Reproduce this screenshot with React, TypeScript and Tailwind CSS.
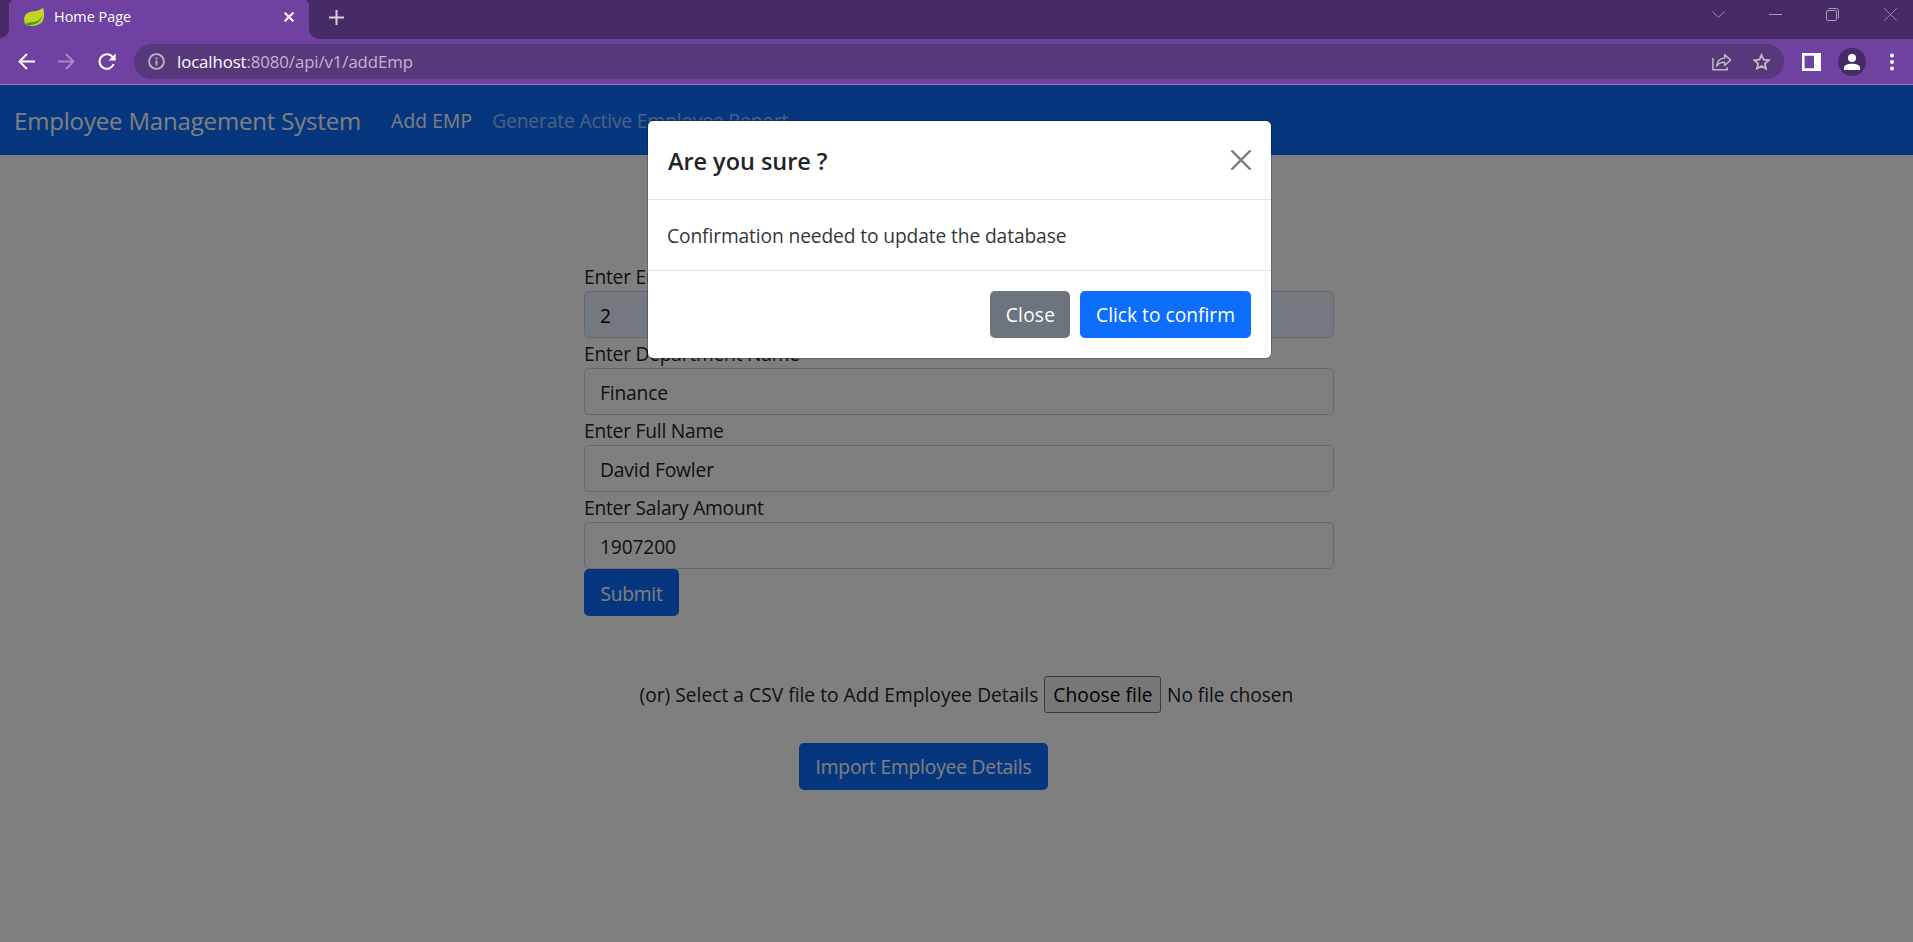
import type { ReactNode } from "react";

function LeafIcon() {
  return (
    <svg width="20" height="20" viewBox="0 0 20 20" className="shrink-0">
      <path d="M19 0.3C20.4 5.5 20.6 11 18.4 14.6C15.8 18.7 9.6 19.6 3.2 18.6C0.6 17.2 -0.2 13.8 0.3 10.6C1 6.6 4.4 4.9 8.6 4.4C12.8 3.9 16.8 3.6 19 0.3Z" fill="#c0d626" />
      <path d="M18.4 7.4C17.6 11.6 14 14.2 9.6 14.9C6.6 15.4 3.4 15.2 1.8 16.6C2 17.6 2.6 18.4 3.4 18.7C7 17.8 11.4 17.6 14.4 15.2C16.9 13.1 18.2 10.4 18.4 7.4Z" fill="#4d9a2a" />
    </svg>
  );
}

function WindowControls() {
  return (
    <div className="flex h-[29px] items-center pr-[16px]">
      <svg width="13" height="7" viewBox="0 0 13 7" className="mr-[44px]" fill="none" stroke="#9a87ab">
        <path d="M0.4 0.4L6.5 6.4L12.6 0.4" />
      </svg>
      <svg width="13" height="13" viewBox="0 0 13 13" className="mr-[44px]" fill="none" stroke="#a897b6">
        <path d="M0 6.5H13" />
      </svg>
      <svg width="13" height="13" viewBox="0 0 13 13" className="mr-[45px]" fill="none" stroke="#a897b6">
        <rect x="0.5" y="2.5" width="10" height="10" rx="1.5" />
        <path d="M2.5 0.5H10A2.5 2.5 0 0 1 12.5 3V10.5" />
      </svg>
      <svg width="13" height="13" viewBox="0 0 13 13" fill="none" stroke="#9a87ab">
        <path d="M0.3 0.3L12.7 12.7M12.7 0.3L0.3 12.7" />
      </svg>
    </div>
  );
}

function TabStrip() {
  return (
    <div className="flex h-[39px] bg-[#6f42a2]">
      <div className="h-[38px] w-[9px] rounded-br-[9px] bg-[#472b66]" />
      <div className="w-[300px] bg-[#472b66]">
        <div className="flex h-full items-start rounded-t-[5px] bg-[#6f42a2] pl-[15px] pr-[15px] text-white">
          <div className="mt-[7px]">
            <LeafIcon />
          </div>
          <span className="ml-[10px] mt-[7px] text-[14.4px] leading-5 tracking-[0.02px]">Home Page</span>
          <svg width="10" height="10" viewBox="0 0 10 10" className="ml-auto mt-[12px]" fill="none" stroke="#fff" strokeWidth="2">
            <path d="M0.6 0.6L9.4 9.4M9.4 0.6L0.6 9.4" />
          </svg>
        </div>
      </div>
      <div className="flex flex-1 items-start justify-between rounded-bl-[10px] bg-[#472b66]">
        <svg width="15" height="15" viewBox="0 0 15 15" className="ml-[20px] mt-[10px]" fill="none" stroke="#d9d3df" strokeWidth="2">
          <path d="M7.5 0V15M0 7.5H15" />
        </svg>
        <WindowControls />
      </div>
    </div>
  );
}

function Toolbar() {
  return (
    <div className="flex h-[46px] items-center border-b border-[#9a6fb8] bg-[#6f42a2] pl-[18px]">
      <svg width="17" height="17" viewBox="0 0 17 17" fill="none" stroke="#fff" strokeWidth="2">
        <path d="M17 8.5H1.5M9 1L1.5 8.5L9 16" />
      </svg>
      <svg width="17" height="17" viewBox="0 0 17 17" className="ml-[23px]" fill="none" stroke="#a68bc5" strokeWidth="2">
        <path d="M0 8.5H15.5M8 1L15.5 8.5L8 16" />
      </svg>
      <svg width="18" height="18" viewBox="0 0 18 18" className="ml-[23px]" fill="none" stroke="#fff" strokeWidth="2.1">
        <path d="M14.9 4.4A7.3 7.3 0 1 0 15.7 11" />
        <path d="M17.6 0.6V7.6H10.6Z" fill="#fff" stroke="none" />
      </svg>
      <div className="ml-[18px] flex h-[35px] w-[1650px] items-center rounded-full bg-[#57387a] pl-[14px] pr-[13px] text-[16.8px]">
        <svg width="17" height="17" viewBox="0 0 17 17" fill="none" stroke="#b9b6bd" strokeWidth="1.9">
          <circle cx="8.5" cy="8.5" r="7.4" />
          <path d="M8.5 7.5V12.5M8.5 4.4V6.3" />
        </svg>
        <span className="ml-[12px] tracking-[-0.09px] text-[#c3b4d3]">
          <span className="text-white">localhost</span>:8080/api/v1/addEmp
        </span>
        <svg width="20" height="18" viewBox="0 0 20 18" className="ml-auto" fill="none" stroke="#bdb9c2" strokeWidth="1.5">
          <path d="M0.9 5V16.8H15.2V14.2" />
          <path d="M4.6 13C5.2 8.4 8 5.2 12.6 4.9V1.6L18.6 7.1L12.6 12.5V9.3C9.2 9.2 6.6 10.4 4.6 13Z" strokeLinejoin="round" />
        </svg>
        <svg width="18" height="18" viewBox="0 0 18 18" className="ml-[21px]" fill="none" stroke="#c2bfc3" strokeWidth="1.8">
          <path d="M8.5 2L10.6 6.7L15.8 7.2L11.9 10.6L13 15.7L8.5 13L4 15.7L5.1 10.6L1.2 7.2L6.4 6.7Z" />
        </svg>
      </div>
      <svg width="19" height="18" viewBox="0 0 19 18" className="ml-[18px]" fill="#fff">
        <path fillRule="evenodd" d="M0 0H19V18H0ZM2.6 2.8V15.3H12V2.8Z" />
      </svg>
      <div className="ml-[17px] flex size-7 items-center justify-center rounded-full bg-[#472b66]">
        <svg width="16" height="16" viewBox="0 0 16 16" fill="#fff">
          <circle cx="8" cy="4" r="4" />
          <path d="M0 16V13.8C0 11 4 9.8 8 9.8S16 11 16 13.8V16Z" />
        </svg>
      </div>
      <svg width="4" height="18" viewBox="0 0 4 18" className="ml-[23.5px]" fill="#fff">
        <circle cx="2" cy="2.5" r="2" />
        <circle cx="2" cy="9" r="2" />
        <circle cx="2" cy="15.5" r="2" />
      </svg>
    </div>
  );
}

function Field({ label, value, filled }: { label: ReactNode; value: string; filled?: boolean }) {
  return (
    <label className="block">
      <span className="block h-[30px] leading-[32px] tracking-[-0.22px] text-[#212529]">{label}</span>
      <span
        className={
          filled
            ? "flex h-[47px] items-center rounded-[5px] border border-[#ced4da] bg-[#e8f0fe] pl-[15px] pt-[4px] tracking-[-0.14px] text-black"
            : "flex h-[47px] items-center rounded-[5px] border border-[#ced4da] bg-white pl-[15px] pt-[4px] tracking-[-0.14px] text-[#212529]"
        }
      >
        {value}
      </span>
    </label>
  );
}

function ConfirmModal() {
  return (
    <div className="absolute inset-0 flex items-start bg-black/50 pl-[647px] pt-[35px]">
      <div className="w-[625px] rounded-[6px] border border-black/20 bg-white bg-clip-padding text-[#212529]">
        <div className="flex h-[79px] items-center justify-between border-b border-[#dee2e6] pl-[20px] pr-[20px]">
          <h5 className="pt-[2px] text-[23.5px] font-semibold leading-[38px] tracking-[-0.05px]">Are you sure ?</h5>
          <svg width="20" height="20" viewBox="0 0 20 20" fill="none" stroke="#7f7f7f" strokeWidth="2.4" strokeLinecap="round">
            <path d="M1.2 1.2L18.8 18.8M18.8 1.2L1.2 18.8" />
          </svg>
        </div>
        <p className="h-[71px] border-b border-[#dee2e6] px-[19px] leading-[72px] tracking-[-0.11px] text-[#33373b]">
          Confirmation needed to update the database
        </p>
        <div className="flex h-[87px] items-center justify-end gap-[10px] pr-[20px] text-white">
          <button className="h-[47px] w-[80px] rounded-[5px] bg-[#6c757d] pl-px pt-[2px] tracking-[0.2px]">Close</button>
          <button className="h-[47px] w-[171px] rounded-[5px] bg-[#0d6efd] pt-[2px]">Click to confirm</button>
        </div>
      </div>
    </div>
  );
}

export default function App() {
  return (
    <div className="flex h-[942px] w-[1913px] flex-col overflow-hidden font-['Open_Sans','Noto_Sans',sans-serif] text-[19.2px]">
      <TabStrip />
      <Toolbar />
      <div className="relative flex flex-1 flex-col bg-white">
        <nav className="flex h-[70px] shrink-0 items-center bg-[#0d6efd] pl-[14px] pt-[2px] text-white">
          <span className="text-[24px] leading-[38px] tracking-[-0.17px]">Employee Management System</span>
          <span className="ml-[30px] tracking-[0.15px]">Add EMP</span>
          <span className="ml-[20px] tracking-[-0.13px] text-white/55">Generate Active Employee Report</span>
        </nav>
        <main className="flex flex-col pt-[106px]">
          <form className="ml-[584px] w-[750px]">
            <Field label="Enter Employee ID" value="2" filled />
            <Field label="Enter Department Name" value="Finance" />
            <Field label="Enter Full Name" value="David Fowler" />
            <Field label="Enter Salary Amount" value="1907200" />
            <button type="button" className="block h-[47px] w-[95px] rounded-[5px] bg-[#0d6efd] pt-[3px] tracking-[-0.25px] text-white">
              Submit
            </button>
          </form>
          <div className="ml-[639.5px] mt-[60px] flex h-[37px] items-center text-[#212529]">
            <span className="w-[404.5px] whitespace-nowrap pt-[2px] tracking-[0.02px]">(or) Select a CSV file to Add Employee Details</span>
            <button className="h-[37px] w-[117px] rounded-[3px] border border-[#767676] bg-[#efefef] pl-px pt-[2px] tracking-[0.05px] text-black">
              Choose file
            </button>
            <span className="ml-[6px] pt-[2px] tracking-[-0.06px]">No file chosen</span>
          </div>
          <button className="ml-[799px] mt-[30px] h-[47px] w-[249px] rounded-[5px] bg-[#0d6efd] pt-[2px] tracking-[-0.17px] text-white">
            Import Employee Details
          </button>
        </main>
        <ConfirmModal />
      </div>
    </div>
  );
}
